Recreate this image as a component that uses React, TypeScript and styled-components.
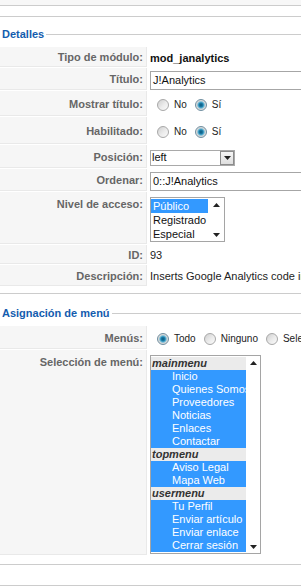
import React from "react";
import styled, { createGlobalStyle } from "styled-components";

const GlobalStyle = createGlobalStyle`
  html, body {
    margin: 0;
    padding: 0;
    background: #fff;
  }
  body {
    font-family: "Liberation Sans", Arial, sans-serif;
    font-size: 11px;
    color: #333;
  }
`;

const menuGroups = [
  {
    name: "mainmenu",
    items: ["Inicio", "Quienes Somos", "Proveedores", "Noticias", "Enlaces", "Contactar"],
  },
  { name: "topmenu", items: ["Aviso Legal", "Mapa Web"] },
  {
    name: "usermenu",
    items: ["Tu Perfil", "Enviar artículo", "Enviar enlace", "Cerrar sesión"],
  },
];

const App = () => {
  return (
    <Page>
      <GlobalStyle />
      <TopStrip />
      <Gap $h={10} />

      <Section $pb={6}>
        <SectionHead $mt={10} $mb={6}>
          <Legend>Detalles</Legend>
          <HeadLine />
        </SectionHead>

        <Row $h={21}>
          <Key>Tipo de módulo:</Key>
          <Value>
            <Strong>mod_janalytics</Strong>
          </Value>
        </Row>
        <Row $h={23}>
          <Key>Título:</Key>
          <Value>
            <TextField $w={220}>J!Analytics</TextField>
          </Value>
        </Row>
        <Row $h={26}>
          <Key>Mostrar título:</Key>
          <Value>
            <RadioGroup options={["No", "Sí"]} checked={1} />
          </Value>
        </Row>
        <Row $h={28}>
          <Key>Habilitado:</Key>
          <Value>
            <RadioGroup options={["No", "Sí"]} checked={1} />
          </Value>
        </Row>
        <Row $h={24}>
          <Key>Posición:</Key>
          <Value>
            <Select>
              <SelectText>left</SelectText>
              <DropButton>
                <Arrow down size={7} />
              </DropButton>
            </Select>
          </Value>
        </Row>
        <Row $h={23}>
          <Key>Ordenar:</Key>
          <Value>
            <TextField $w={220}>0::J!Analytics</TextField>
          </Value>
        </Row>
        <Row $h={53}>
          <Key $top>Nivel de acceso:</Key>
          <Value $top>
            <ListBox $w={75} $h={45}>
              <ListItems>
                <Option $sel $row={14} $indent={2}>Público</Option>
                <Option $row={14} $indent={2}>Registrado</Option>
                <Option $row={14} $indent={2}>Especial</Option>
              </ListItems>
              <ScrollBar $w={16}>
                <Arrow size={7} />
                <Arrow down size={7} />
              </ScrollBar>
            </ListBox>
          </Value>
        </Row>
        <Row $h={20}>
          <Key>ID:</Key>
          <Value>93</Value>
        </Row>
        <Row $h={22}>
          <Key>Descripción:</Key>
          <Value>Inserts Google Analytics code into your site</Value>
        </Row>
      </Section>

      <Section $pb={8}>
        <SectionHead $mt={12} $mb={6}>
          <Legend>Asignación de menú</Legend>
          <HeadLine />
        </SectionHead>

        <Row $h={24}>
          <Key>Menús:</Key>
          <Value>
            <RadioGroup options={["Todo", "Ninguno", "Seleccionar de la lista"]} checked={0} />
          </Value>
        </Row>
        <Row $h={206}>
          <Key $top>Selección de menú:</Key>
          <Value $top>
            <ListBox $w={111} $h={199}>
              <ListItems>
                {menuGroups.map((g) => (
                  <React.Fragment key={g.name}>
                    <GroupLabel>{g.name}</GroupLabel>
                    {g.items.map((item) => (
                      <Option key={item} $sel $row={13} $indent={21}>
                        {item}
                      </Option>
                    ))}
                  </React.Fragment>
                ))}
              </ListItems>
              <ScrollBar $w={14}>
                <Arrow size={7} />
                <Arrow down size={7} />
              </ScrollBar>
            </ListBox>
          </Value>
        </Row>
      </Section>

      <Gap $h={20} />
    </Page>
  );
};

const RadioGroup = ({ options, checked }: { options: string[]; checked: number }) => (
  <Radios>
    {options.map((o, i) => (
      <RadioItem key={o}>
        <RadioDot $on={i === checked} />
        <span>{o}</span>
      </RadioItem>
    ))}
  </Radios>
);

const Arrow = ({ down, size }: { down?: boolean; size: number }) => (
  <svg width={size} height={4} viewBox="0 0 7 4">
    <polygon points={down ? "0,0 7,0 3.5,4" : "0,4 7,4 3.5,0"} fill="#222" />
  </svg>
);

const Page = styled.div`
  width: 301px;
  height: 586px;
  overflow: hidden;
  background: #fff;
`;

const TopStrip = styled.div`
  height: 5px;
  background: #f7f7f7;
  border-bottom: 1px solid #cccccc;
`;

const Gap = styled.div<{ $h: number }>`
  height: ${(p) => p.$h}px;
  border-bottom: 1px solid #cccccc;
`;

const Section = styled.div<{ $pb: number }>`
  display: flex;
  flex-direction: column;
  padding-bottom: ${(p) => p.$pb}px;
  border-bottom: 1px solid #cccccc;
`;

const SectionHead = styled.div<{ $mt: number; $mb: number }>`
  display: flex;
  align-items: center;
  height: 14px;
  margin: ${(p) => p.$mt}px 0 ${(p) => p.$mb}px;
`;

const Legend = styled.span`
  padding: 0 2px 0 2px;
  color: #135cae;
  font-size: 11px;
  font-weight: bold;
  line-height: 14px;
  white-space: nowrap;
`;

const HeadLine = styled.div`
  flex: 1;
  height: 1px;
  background: #cccccc;
`;

const Row = styled.div<{ $h: number }>`
  display: flex;
  height: ${(p) => p.$h}px;
  box-sizing: border-box;
  border-bottom: 1px solid #fff;
`;

const Key = styled.div<{ $top?: boolean }>`
  flex: 0 0 147px;
  box-sizing: border-box;
  display: flex;
  justify-content: flex-end;
  align-items: ${(p) => (p.$top ? "flex-start" : "center")};
  padding: ${(p) => (p.$top ? "6px 3px 0 0" : "2px 3px 0 0")};
  background: #f6f6f6;
  border-right: 1px solid #e9e9e9;
  border-bottom: 1px solid #e9e9e9;
  color: #666;
  font-weight: bold;
  line-height: 13px;
  white-space: nowrap;
`;

const Value = styled.div<{ $top?: boolean }>`
  flex: 1 0 auto;
  display: flex;
  align-items: ${(p) => (p.$top ? "flex-start" : "center")};
  padding: ${(p) => (p.$top ? "5px 0 0 3px" : "2px 0 0 3px")};
  color: #222;
  line-height: 13px;
  white-space: nowrap;
`;

const Strong = styled.span`
  color: #111;
  font-weight: bold;
`;

const TextField = styled.div<{ $w: number }>`
  width: ${(p) => p.$w}px;
  height: 19px;
  box-sizing: border-box;
  padding-left: 2px;
  border: 1px solid #a6a6a6;
  background: #fff;
  color: #111;
  line-height: 17px;
`;

const Radios = styled.div`
  display: flex;
  align-items: center;
  padding-left: 7px;
`;

const RadioItem = styled.label`
  display: flex;
  align-items: center;
  margin-right: 8px;
  color: #222;
  font-size: 10px;
`;

const RadioDot = styled.span<{ $on?: boolean }>`
  flex: 0 0 auto;
  width: 12px;
  height: 12px;
  box-sizing: border-box;
  margin-right: 5px;
  border-radius: 50%;
  border: 1px solid ${(p) => (p.$on ? "#6f8ea0" : "#a8a8a8")};
  background: ${(p) =>
    p.$on
      ? "radial-gradient(circle at 50% 50%, #0d5579 0, #1c7fab 2px, #6fbcda 3.2px, #d6d6d6 4.2px, #f2f2f2 100%)"
      : "linear-gradient(135deg, #cfcfcf 0%, #ececec 55%, #fafafa 100%)"};
`;

const Select = styled.div`
  display: flex;
  align-items: center;
  width: 85px;
  height: 16px;
  box-sizing: border-box;
  border: 1px solid #a9a9a9;
  background: #fff;
`;

const SelectText = styled.span`
  flex: 1;
  padding-left: 1px;
  color: #111;
`;

const DropButton = styled.div`
  display: flex;
  align-items: center;
  justify-content: center;
  width: 14px;
  height: 14px;
  box-sizing: border-box;
  border: 1px solid #8c8c8c;
  background: linear-gradient(#f6f6f6, #dedede);
`;

const ListBox = styled.div<{ $w: number; $h: number }>`
  display: flex;
  width: ${(p) => p.$w}px;
  height: ${(p) => p.$h}px;
  box-sizing: border-box;
  border: 1px solid #a5a5a5;
  background: #fff;
  overflow: hidden;
`;

const ListItems = styled.div`
  flex: 1;
  min-width: 0;
  padding-top: 1px;
  overflow: hidden;
`;

const Option = styled.div<{ $sel?: boolean; $row: number; $indent: number }>`
  height: ${(p) => p.$row}px;
  line-height: ${(p) => p.$row}px;
  padding-left: ${(p) => p.$indent}px;
  background: ${(p) => (p.$sel ? "#3399ff" : "transparent")};
  color: ${(p) => (p.$sel ? "#fff" : "#111")};
  white-space: nowrap;
  overflow: hidden;
`;

const GroupLabel = styled.div`
  height: 13px;
  line-height: 13px;
  padding-left: 1px;
  background: #ebebeb;
  color: #333;
  font-weight: bold;
  font-style: italic;
`;

const ScrollBar = styled.div<{ $w: number }>`
  flex: 0 0 ${(p) => p.$w}px;
  display: flex;
  flex-direction: column;
  justify-content: space-between;
  align-items: center;
  padding: 5px 0 4px;
  box-sizing: border-box;
`;

export default App;
